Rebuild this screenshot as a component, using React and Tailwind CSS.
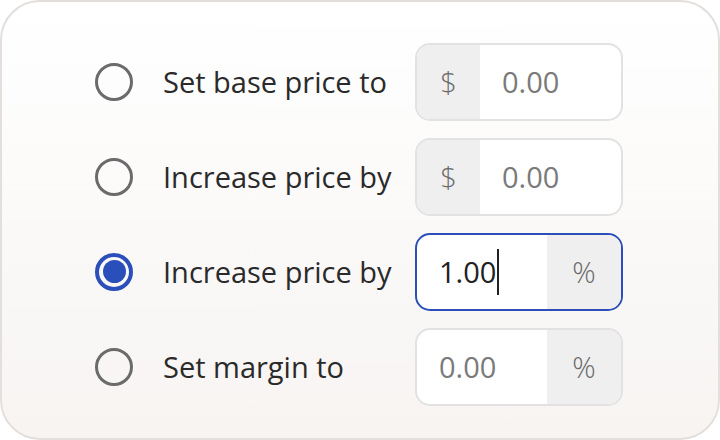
import { useState } from "react";

const rows = [
  { label: "Set base price to", prefix: "$", value: "", placeholder: "0.00" },
  { label: "Increase price by", prefix: "$", value: "", placeholder: "0.00" },
  { label: "Increase price by", suffix: "%", value: "1.00", placeholder: "0.00" },
  { label: "Set margin to", suffix: "%", value: "", placeholder: "0.00" },
];

function Radio({ checked }) {
  if (checked) {
    return (
      <div className="w-[38px] h-[38px] rounded-full border-[4px] border-[#2b4fba] flex items-center justify-center shrink-0">
        <div className="w-[23px] h-[23px] rounded-full bg-[#2b4fba]" />
      </div>
    );
  }
  return <div className="w-[38px] h-[38px] rounded-full border-[3px] border-[#6b6b6b] shrink-0" />;
}

function PriceInput({ row, focused }) {
  const text = row.value || row.placeholder;
  return (
    <div
      className={`w-[208px] h-[78px] rounded-[15px] border-2 overflow-hidden flex bg-white shrink-0 ${
        focused ? "border-[#2b4fba]" : "border-[#e2e2e2]"
      }`}
    >
      {row.prefix && (
        <div className="w-[63px] bg-[#efefef] flex items-center justify-center text-[#6a6a6a] font-light">
          {row.prefix}
        </div>
      )}
      <div className="flex-1 flex items-center pl-[22px]">
        <span className={row.value ? "text-[#222]" : "text-[#7a7a7a]"}>{text}</span>
        {focused && <span className="w-[2px] h-[46px] bg-[#222] ml-[1px]" />}
      </div>
      {row.suffix && (
        <div className="w-[74px] bg-[#efefef] flex items-center justify-center text-[#6a6a6a] font-light">
          {row.suffix}
        </div>
      )}
    </div>
  );
}

export default function App() {
  const [selected] = useState(2);
  return (
    <div
      className="w-[720px] h-[440px] rounded-[40px] border-2 border-[#e3dfdc] bg-gradient-to-b from-white to-[#f7f4f2] flex flex-col justify-center gap-[17px] pt-[8px] pl-[93px] text-[29px] text-[#2a2a2a]"
      style={{ fontFamily: '"Open Sans", "Noto Sans", sans-serif' }}
    >
      {rows.map((row, i) => (
        <div key={i} className="flex items-center">
          <Radio checked={i === selected} />
          <div className="w-[252px] ml-[30px] whitespace-nowrap">{row.label}</div>
          <PriceInput row={row} focused={i === selected} />
        </div>
      ))}
    </div>
  );
}
